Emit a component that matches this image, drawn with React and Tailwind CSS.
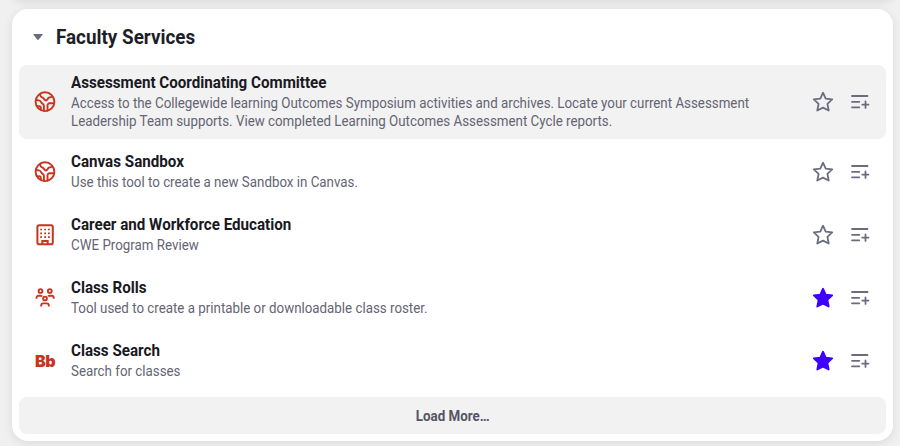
const globe = (
  <svg viewBox="0 0 24 24" className="h-6 w-6" fill="none" stroke="#c83420" strokeWidth="1.900" strokeLinejoin="round" strokeLinecap="round">
    <circle cx="12" cy="11.700" r="9.400" />
    <path d="M7.300 4v1.300c0 1.500.8 1.900 2 2.200 1.800.4 2 3 3.600 3 1.500 0 1.500-2 3-2.800l2.800-.8" />
    <path d="M2.800 10l3 .4c2.400.3 2 2.200 3.300 3 1.200.7 1.800 1.200 1.800 2.600v4.800" />
    <path d="M21.200 13.300h-4.400c-1.700 0-2.300 1-2.300 2.600v4.900" />
    <path d="M4.400 16.200h1.700c1.200 0 1.700.7 1.700 1.700v1.500" />
  </svg>
);

const building = (
  <svg viewBox="0 0 24 24" className="h-6 w-6" fill="none" stroke="#c83420" strokeWidth="2">
    <rect x="4.400" y="2.200" width="15.400" height="19" rx="1.800" />
    <path d="M9.300 21v-3h5.400v3" />
    <path d="M7.200 6.500h1.800m2.200 0h1.800m2 0h1.800M7.200 10.300h1.800m2.200 0h1.800m2 0h1.800M7.200 14.100h1.800m2.200 0h1.800m2 0h1.800" strokeWidth="1.700" />
  </svg>
);

const people = (
  <svg viewBox="0 0 24 24" className="h-6 w-6" fill="none" stroke="#c83420" strokeWidth="1.900">
    <circle cx="7.500" cy="5" r="1.900" />
    <circle cx="16.800" cy="5" r="1.900" />
    <circle cx="12" cy="12.500" r="1.900" />
    <path d="M3.500 12.800v-1a2 2 0 0 1 2-2h2c.8 0 1.200.3 1.500.8M20.700 12.800v-1a2 2 0 0 0-2-2h-2c-.8 0-1.200.3-1.500.8M8.200 20.600v-1.200a2 2 0 0 1 2-2h3.600a2 2 0 0 1 2 2v1.200" />
  </svg>
);

const blackboard = (
  <span className="font-[Inter,sans-serif] text-[16px] leading-6 font-black tracking-[-0.6px] text-[#c83420]">Bb</span>
);

const services = [
  { icon: globe, title: "Assessment Coordinating Committee", text: "Access to the Collegewide learning Outcomes Symposium activities and archives. Locate your current Assessment Leadership Team supports. View completed Learning Outcomes Assessment Cycle reports.", active: true },
  { icon: globe, title: "Canvas Sandbox", text: "Use this tool to create a new Sandbox in Canvas." },
  { icon: building, title: "Career and Workforce Education", text: "CWE Program Review" },
  { icon: people, title: "Class Rolls", text: "Tool used to create a printable or downloadable class roster.", starred: true },
  { icon: blackboard, title: "Class Search", text: "Search for classes", starred: true },
];

function Star({ filled }) {
  return (
    <svg viewBox="0 0 24 24" className="h-6 w-6" fill={filled ? "#3d00ff" : "none"} stroke={filled ? "#3d00ff" : "#6c6c80"} strokeWidth="1.800" strokeLinejoin="round">
      <path d="M12 2.700l2.700 5.900 6.500.8-4.800 4.500 1.300 6.600L12 17.600l-5.700 2.900 1.300-6.600-4.800-4.500 6.500-.8z" />
    </svg>
  );
}

function ListAdd() {
  return (
    <svg viewBox="0 0 24 24" className="h-6 w-6" fill="none" stroke="#6c6c80" strokeWidth="1.800" strokeLinecap="round">
      <path d="M4 6h15.500M4 11.800h7.300M4 17.300h7.300M17.500 11.500v6.400M14.300 14.600h6.200" />
    </svg>
  );
}

function Service({ icon, title, text, active, starred }) {
  return (
    <li className={`flex items-center rounded-lg pr-[14px] pl-[14px] ${active ? "h-[74px] bg-[#f2f2f2]" : "h-[56px]"}`}>
      <div className="flex w-6 shrink-0 items-center justify-center">{icon}</div>
      <div className="ml-[14px] w-[736px] shrink-0 origin-left scale-x-[.952]">
        <h3 className="-mt-px mb-px text-[15.950px] leading-5 font-bold text-[#191923]">{title}</h3>
        <p className="text-[14px] leading-[18px] text-[#646473]">{text}</p>
      </div>
      <div className="ml-auto flex shrink-0 gap-[13px]">
        <Star filled={starred} />
        <ListAdd />
      </div>
    </li>
  );
}

export default function App() {
  return (
    <div className="h-[447px] overflow-hidden bg-white font-[Roboto,sans-serif]">
      <div className="h-[446px] overflow-hidden bg-[#f0f0f0] pr-[7px] pl-3">
        <div className="-mt-5 h-5 rounded-2xl bg-white shadow-[0_2px_8px_rgba(30,30,60,0.1)]" />
        <section className="mt-[9px] h-[432px] rounded-2xl bg-white px-[7px] shadow-[0_2px_8px_rgba(30,30,60,0.1)]">
          <header className="flex h-14 items-center pl-[14px]">
            <svg viewBox="0 0 10 6" className="h-[6px] w-[10px]" fill="#6c6c80">
              <path d="M1 0h8q1 0 .5.800L5.800 5.500q-.8.800-1.600 0L.5.800Q0 0 1 0z" />
            </svg>
            <h2 className="ml-[13px] origin-left scale-x-[.953] pt-px text-[19.800px] leading-7 font-bold text-[#1e1e28]">Faculty Services</h2>
          </header>
          <ul className="flex flex-col gap-[6.900px] [&>li:nth-child(2)]:-mt-[1.800px]">
            {services.map((service) => <Service key={service.title} {...service} />)}
          </ul>
          <button className="mt-[8.200px] block h-[37px] w-full rounded-lg bg-[#f2f2f2] pt-px text-[#555565]">
            <span className="inline-block scale-x-[.953] text-[14px] leading-5 font-bold">Load More…</span>
          </button>
        </section>
      </div>
    </div>
  );
}
